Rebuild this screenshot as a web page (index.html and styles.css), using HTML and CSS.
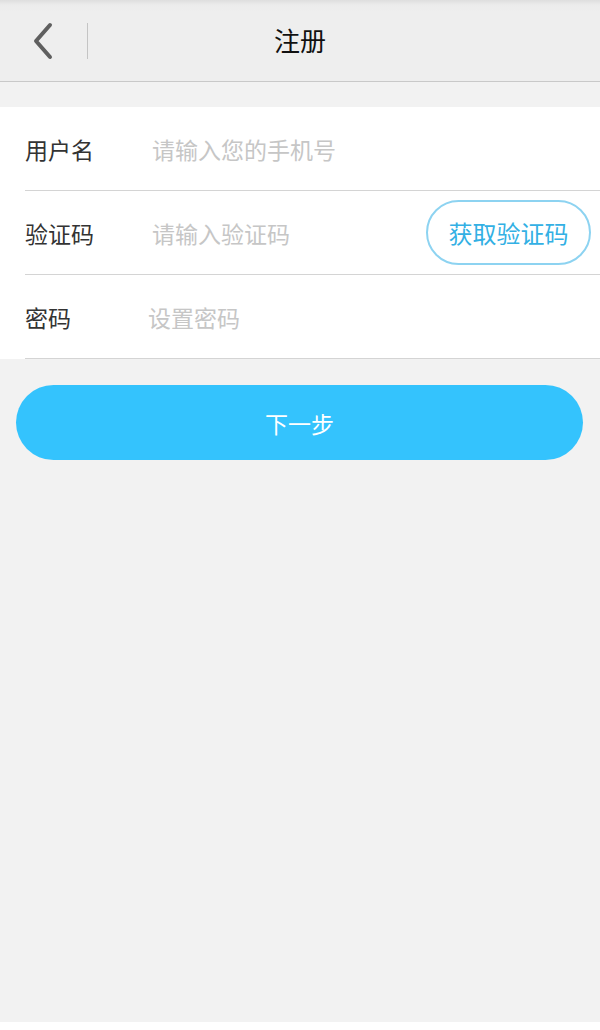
FILE: index.html
```html
<!DOCTYPE html>
<html lang="zh-CN">
<head>
<meta charset="utf-8">
<title>注册</title>
<link rel="stylesheet" href="styles.css">
</head>
<body>
<div class="page">
  <header class="topbar">
    <div class="back">
      <svg width="24" height="40" viewBox="0 0 24 40"><path d="M19 4 L5 20 L19 36" fill="none" stroke="#5f5f5f" stroke-width="4" stroke-linecap="round" stroke-linejoin="round"/></svg>
    </div>
    <div class="divider"></div>
    <h1 class="title">注册</h1>
  </header>
  <div class="gap"></div>
  <div class="form">
    <div class="row">
      <div class="row-inner">
        <span class="label">用户名</span>
        <span class="placeholder">请输入您的手机号</span>
      </div>
    </div>
    <div class="row">
      <div class="row-inner">
        <span class="label">验证码</span>
        <span class="placeholder">请输入验证码</span>
        <span class="code-btn">获取验证码</span>
      </div>
    </div>
    <div class="row">
      <div class="row-inner">
        <span class="label label-short">密码</span>
        <span class="placeholder">设置密码</span>
      </div>
    </div>
  </div>
  <div class="next-wrap">
    <div class="next-btn">下一步</div>
  </div>
</div>
</body>
</html>
```

FILE: styles.css
```css
* { box-sizing: border-box; }
html, body {
  margin: 0;
  padding: 0;
  background: #ffffff;
}
body {
  font-family: "Noto Sans CJK SC", "Noto Sans", sans-serif;
  width: 600px;
  height: 1030px;
  overflow: hidden;
}
.page {
  height: 1022px;
  background: #f2f2f2;
}
.topbar {
  height: 82px;
  background: linear-gradient(to bottom, #dedede 0px, #ececec 5px, #eeeeee 12px, #eeeeee 100%);
  border-bottom: 1px solid #c9c9c9;
  display: flex;
  align-items: center;
  position: relative;
}
.back {
  width: 87px;
  display: flex;
  align-items: center;
  padding-left: 31px;
  height: 40px;
}
.divider {
  width: 1px;
  height: 36px;
  background: #c4c4c4;
}
.title {
  position: absolute;
  left: 0;
  right: 0;
  top: 0;
  margin: 0;
  height: 81px;
  line-height: 79px;
  text-align: center;
  font-size: 26px;
  font-weight: 400;
  color: #111;
  pointer-events: none;
}
.gap {
  height: 25px;
}
.form {
  background: #ffffff;
}
.row {
  padding-left: 25px;
  background: #ffffff;
}
.row-inner {
  height: 84px;
  display: flex;
  align-items: center;
  border-bottom: 1px solid #d4d4d4;
  padding-right: 9px;
}
.label {
  width: 127px;
  font-size: 23px;
  color: #333333;
  flex-shrink: 0;
}
.label-short {
  width: 123px;
}
.placeholder {
  flex: 1;
  font-size: 23px;
  color: #c6c6c6;
}
.code-btn {
  width: 165px;
  height: 65px;
  border: 2px solid #8dd3f1;
  border-radius: 33px;
  display: flex;
  align-items: center;
  justify-content: center;
  font-size: 24px;
  color: #33b0e4;
}
.next-wrap {
  padding: 26px 17px 0 16px;
}
.next-btn {
  height: 75px;
  border-radius: 38px;
  background: #34c3fd;
  color: #ffffff;
  font-size: 23px;
  display: flex;
  align-items: center;
  justify-content: center;
}
```
